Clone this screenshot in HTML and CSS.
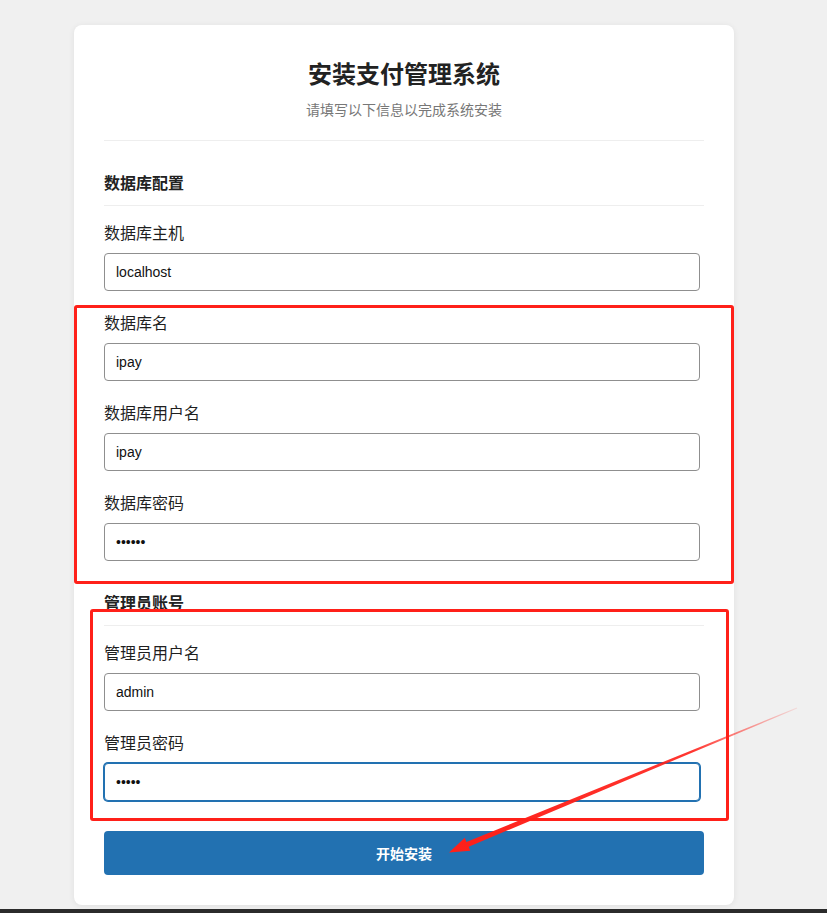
FILE: index.html
```html
<!DOCTYPE html>
<html lang="zh-CN">
<head>
<meta charset="utf-8">
<title>安装支付管理系统</title>
<link rel="stylesheet" href="styles.css">
</head>
<body>
<div class="wrap">
  <div class="card">
    <div class="header">
      <h1 class="title">安装支付管理系统</h1>
      <p class="subtitle">请填写以下信息以完成系统安装</p>
    </div>
    <form class="form">
      <h2 class="section">数据库配置</h2>
      <div class="field">
        <label class="label">数据库主机</label>
        <input class="input" type="text" value="localhost">
      </div>
      <div class="field">
        <label class="label">数据库名</label>
        <input class="input" type="text" value="ipay">
      </div>
      <div class="field">
        <label class="label">数据库用户名</label>
        <input class="input" type="text" value="ipay">
      </div>
      <div class="field">
        <label class="label">数据库密码</label>
        <input class="input" type="password" value="123456">
      </div>
      <h2 class="section section-second">管理员账号</h2>
      <div class="field">
        <label class="label">管理员用户名</label>
        <input class="input" type="text" value="admin">
      </div>
      <div class="field">
        <label class="label">管理员密码</label>
        <input class="input input-focus" type="password" value="12345">
      </div>
      <button class="btn" type="button">开始安装</button>
    </form>
  </div>
</div>
<div class="mark mark-one"></div>
<div class="mark mark-two"></div>
<svg class="arrow" width="827" height="913" viewBox="0 0 827 913">
  <defs>
    <linearGradient id="fade" gradientUnits="userSpaceOnUse" x1="797" y1="708" x2="449" y2="852">
      <stop offset="0" stop-color="#ff2019" stop-opacity="0.1"/>
      <stop offset="0.3" stop-color="#ff2019" stop-opacity="0.9"/>
      <stop offset="1" stop-color="#ff2019" stop-opacity="1"/>
    </linearGradient>
  </defs>
  <polygon fill="url(#fade)" points="796.8,707.6 466.4,841.9 464.8,837.8 449,852.5 470.2,850.8 468.7,846.7 797.2,708.4"/>
</svg>
<div class="bottom-bar"></div>
</body>
</html>
```

FILE: styles.css
```css
* { box-sizing: border-box; }
html, body { margin: 0; padding: 0; }
body {
  background: #f0f0f0;
  font-family: "Liberation Sans", "Noto Sans CJK SC", sans-serif;
  color: #333;
  position: relative;
  height: 913px;
  overflow: hidden;
}
.wrap {
  width: 808px;
  padding-top: 25px;
}
.card {
  width: 660px;
  margin: 0 auto;
  background: #fff;
  border-radius: 8px;
  box-shadow: 0 1px 6px rgba(0,0,0,0.07);
  padding: 35px 30px 30px;
}
.header {
  text-align: center;
  padding-bottom: 20px;
  border-bottom: 1px solid #eeeeee;
}
.title {
  margin: 0;
  font-size: 24px;
  line-height: 29px;
  font-weight: 700;
  color: #222;
}
.subtitle {
  margin: 11px 0 0;
  font-size: 14px;
  line-height: 20px;
  color: #777;
}
.form { display: flex; flex-direction: column; }
.section {
  margin: 32px 0 17px;
  font-size: 16px;
  line-height: 22px;
  font-weight: 700;
  color: #222;
  padding-bottom: 10px;
  border-bottom: 1px solid #eeeeee;
}
.section-second { margin-top: 10px; }
.field {
  display: flex;
  flex-direction: column;
  margin-bottom: 22px;
}
.label {
  font-size: 16px;
  line-height: 22px;
  font-weight: 400;
  color: #1f1f1f;
  margin-bottom: 8px;
}
.input {
  width: 596px;
  height: 38px;
  border: 1px solid #8f8f8f;
  border-radius: 4px;
  padding: 0 11px;
  font-family: "Liberation Sans", "Noto Sans CJK SC", sans-serif;
  font-size: 14px;
  color: #111;
  background: #fff;
  outline: none;
}
.input-focus {
  border-color: #2271b1;
  box-shadow: 0 0 0 1px #2271b1;
}
.btn {
  margin-top: 8px;
  width: 600px;
  height: 44px;
  border: none;
  border-radius: 4px;
  background: #2271b1;
  color: #fff;
  font-family: "Liberation Sans", "Noto Sans CJK SC", sans-serif;
  font-size: 14px;
  font-weight: 700;
}
.mark {
  position: absolute;
  border: 3px solid #ff2019;
  border-radius: 3px;
  pointer-events: none;
}
.mark-one { left: 74px; top: 305px; width: 660px; height: 279px; }
.mark-two { left: 90px; top: 609px; width: 639px; height: 212px; }
.arrow {
  position: absolute;
  left: 0;
  top: 0;
  pointer-events: none;
}
.bottom-bar {
  position: absolute;
  left: 0;
  bottom: 0;
  width: 100%;
  height: 4px;
  background: #2b2b2b;
}
```
